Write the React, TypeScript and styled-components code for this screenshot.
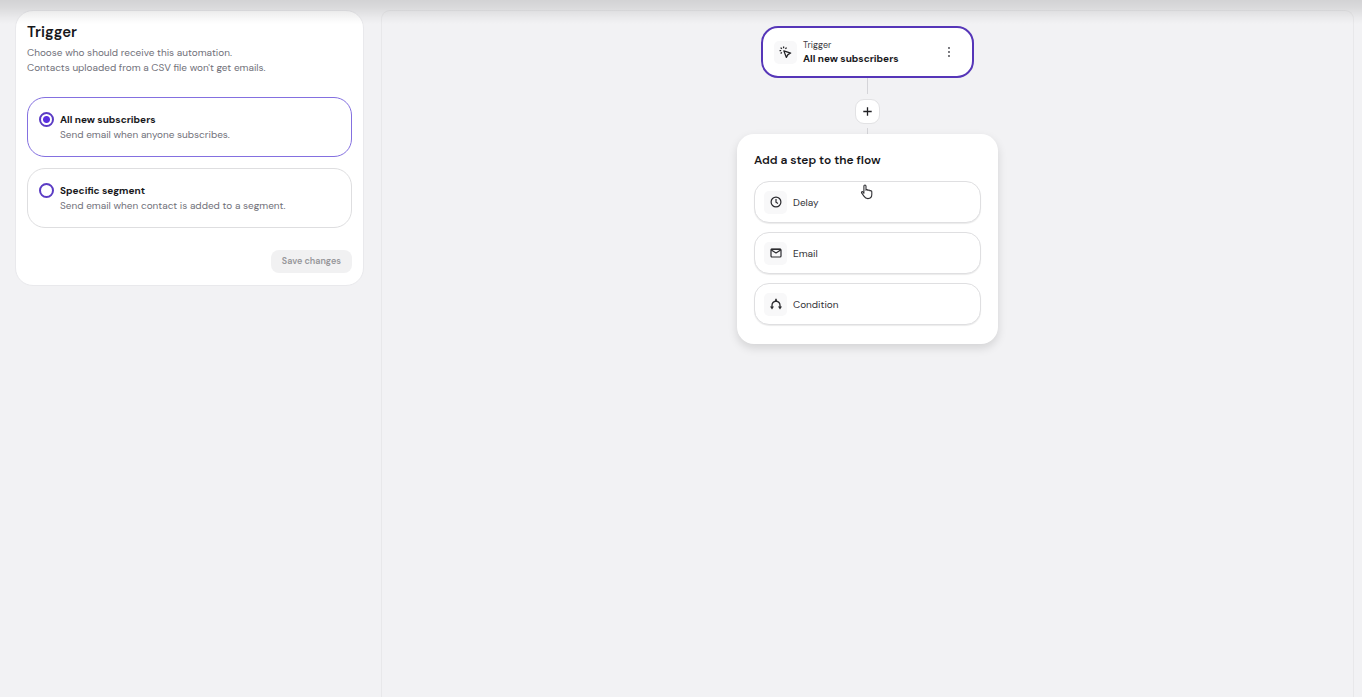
import React, { useState } from "react";
import styled, { createGlobalStyle } from "styled-components";

const GlobalStyle = createGlobalStyle`
  *, *::before, *::after { box-sizing: border-box; }
  body {
    margin: 0;
    background: #f2f2f4;
    color: #18181b;
    font-family: "DM Sans", Lato, "Open Sans", sans-serif;
    font-size: 10px;
    line-height: 15px;
  }
  button, input { font: inherit; color: inherit; }
  h1, h2, p { margin: 0; }
`;

const Page = styled.main`
  display: flex;
  align-items: flex-start;
  gap: 17px;
  min-height: 100vh;
  padding: 10px 8px 0 15px;
`;

const TopShade = styled.div`
  position: absolute;
  inset: 0 0 auto 0;
  height: 24px;
  pointer-events: none;
  background: linear-gradient(
    rgba(0, 0, 0, 0.13),
    rgba(0, 0, 0, 0.1) 30%,
    rgba(0, 0, 0, 0.03) 75%,
    transparent
  );
`;

const SettingsCard = styled.form`
  display: flex;
  flex-direction: column;
  flex: 0 0 349px;
  padding: 11px 11px 12px;
  background: #fff;
  border: 1px solid #e9e9ec;
  border-radius: 18px;
`;

const Heading = styled.h1`
  font-size: 15px;
  line-height: 20px;
  font-weight: 600;
`;

const Muted = styled.p`
  color: #71717a;
`;

const Intro = styled(Muted)`
  padding: 3px 0 22px;
`;

const Options = styled.div`
  display: flex;
  flex-direction: column;
  gap: 11px;
`;

const Option = styled.label<{ $selected: boolean }>`
  display: flex;
  align-items: flex-start;
  gap: 6px;
  padding: 14px 11px;
  background: #fff;
  border: 1px solid ${(p) => (p.$selected ? "#8470e0" : "#dedee0")};
  border-radius: 18px;
  cursor: pointer;
`;

const Radio = styled.input`
  appearance: none;
  flex: none;
  width: 15px;
  height: 15px;
  margin: 0;
  border: 2px solid #5b3cc4;
  border-radius: 50%;
  background: #fff;
  &:checked {
    background: radial-gradient(circle, #5a2fe0 3px, #fff 4px);
  }
`;

const Strong = styled.p`
  font-weight: 700;
`;

const SaveButton = styled.button`
  align-self: flex-end;
  height: 23px;
  margin-top: 22px;
  padding: 0 11px;
  border: 0;
  border-radius: 8px;
  background: #f1f1f2;
  color: #97979b;
  font-size: 9px;
  font-weight: 600;
`;

const Canvas = styled.section`
  display: flex;
  flex-direction: column;
  align-items: center;
  align-self: stretch;
  flex: 1;
  padding-top: 15px;
  border: 1px solid #e8e8ea;
  border-bottom: 0;
  border-radius: 9px 9px 0 0;
`;

const TriggerNode = styled.article`
  display: flex;
  align-items: center;
  gap: 6px;
  width: 213px;
  height: 52px;
  padding: 0 15px 0 11px;
  background: #fff;
  border: 2px solid #5636b8;
  border-radius: 17px;
`;

const IconTile = styled.span`
  display: grid;
  place-items: center;
  flex: none;
  width: 23px;
  height: 23px;
  border-radius: 5px;
  background: #f8f8f9;
`;

const NodeText = styled.div`
  flex: 1;
`;

const Kind = styled.p`
  font-size: 9px;
  line-height: 12px;
  color: #3f3f46;
`;

const MenuButton = styled.button`
  display: grid;
  place-items: center;
  width: 16px;
  height: 20px;
  padding: 0;
  border: 0;
  background: none;
`;

const Connector = styled.span<{ $length: number }>`
  width: 1px;
  height: ${(p) => p.$length}px;
  background: #d4d4d8;
`;

const AddButton = styled.button`
  display: grid;
  place-items: center;
  width: 25px;
  height: 25px;
  margin: 5px 0 4px;
  padding: 0;
  border: 1px solid #e2e2e4;
  border-radius: 9px;
  background: #fff;
`;

const StepMenu = styled.section`
  width: 261px;
  padding: 17px 17px 19px;
  background: #fff;
  border-radius: 17px;
  box-shadow: 0 4px 10px rgba(0, 0, 0, 0.13);
`;

const MenuTitle = styled.h2`
  font-size: 12px;
  line-height: 18px;
  font-weight: 600;
`;

const Steps = styled.div`
  display: flex;
  flex-direction: column;
  gap: 9px;
  margin-top: 12px;
`;

const StepButton = styled.button`
  position: relative;
  display: flex;
  align-items: center;
  gap: 6px;
  height: 42px;
  padding: 0 9px;
  border: 1px solid #dfdfe1;
  border-radius: 15px;
  background: #fff;
  box-shadow: 0 1px 1px rgba(0, 0, 0, 0.08);
  color: #333338;
  text-align: left;
`;

const Pointer = styled.svg`
  position: absolute;
  left: 105px;
  top: 2px;
  pointer-events: none;
`;

const ClickIcon = () => (
  <svg width="13" height="13" viewBox="0 0 24 24" fill="none" stroke="#202024" strokeWidth="2.400" strokeLinejoin="round" aria-hidden="true">
    <path d="M9 9 21.500 13l-5 2.800L13.500 21z" />
    <path d="M8.500 1v3M1 8.500h3M3 3l2.200 2.200M14 3l-2.200 2.200M3 14l2.200-2.200" />
  </svg>
);

const ClockIcon = () => (
  <svg width="12" height="12" viewBox="0 0 12 12" fill="none" stroke="#2b2b2f" strokeWidth="1.200" aria-hidden="true">
    <circle cx="6" cy="6" r="4.900" />
    <path d="M6 3v3.200l2 1.200" />
  </svg>
);

const MailIcon = () => (
  <svg width="12" height="12" viewBox="0 0 12 12" fill="none" stroke="#2b2b2f" strokeWidth="1.200" strokeLinejoin="round" aria-hidden="true">
    <rect x="1" y="2" width="10" height="8" rx="1" />
    <path d="M1.300 3 6 6l4.700-3M1 2.400h10" />
  </svg>
);

const BranchIcon = () => (
  <svg width="12" height="12" viewBox="0 0 12 12" fill="none" stroke="#2b2b2f" strokeWidth="1.300" aria-hidden="true">
    <path d="M6 .8v2.400M2 10V7.500C2 5.500 3.500 3.600 6 3.200C8.500 3.600 10 5.500 10 7.500V10" />
    <path d="M0 8.600h4l-2 2.900zM8 8.600h4l-2 2.900zM4.400 3.400 6 .8l1.600 2.600z" fill="#2b2b2f" stroke="none" />
  </svg>
);

const HandPointer = () => (
  <Pointer width="14" height="16" viewBox="0 0 14 16" aria-hidden="true">
    <path
      d="M3.900 9.300V2.200c0-1.600 2.100-1.600 2.100 0v4c.2-.9 1.900-.8 2 .3.300-.8 1.800-.7 2 .5.400-.7 1.800-.5 1.800.8v2.800c0 2.600-1.300 4-3.900 4-2 0-2.900-.8-3.800-2.200L1.600 8.900c-.5-1 .7-1.700 1.400-.9z"
      fill="#fff"
      stroke="#303034"
      strokeWidth="1.100"
      strokeLinejoin="round"
    />
  </Pointer>
);

const triggers = [
  { id: "all", title: "All new subscribers", text: "Send email when anyone subscribes." },
  { id: "segment", title: "Specific segment", text: "Send email when contact is added to a segment." },
];

const steps = [
  { label: "Delay", Icon: ClockIcon },
  { label: "Email", Icon: MailIcon },
  { label: "Condition", Icon: BranchIcon },
];

export default function App() {
  const [selected, setSelected] = useState("all");
  return (
    <>
      <GlobalStyle />
      <Page>
        <SettingsCard>
          <Heading>Trigger</Heading>
          <Intro>
            Choose who should receive this automation.
            <br />
            Contacts uploaded from a CSV file won't get emails.
          </Intro>
          <Options role="radiogroup" aria-label="Trigger">
            {triggers.map((t) => (
              <Option key={t.id} $selected={selected === t.id}>
                <Radio
                  type="radio"
                  name="trigger"
                  value={t.id}
                  checked={selected === t.id}
                  onChange={() => setSelected(t.id)}
                />
                <div>
                  <Strong>{t.title}</Strong>
                  <Muted>{t.text}</Muted>
                </div>
              </Option>
            ))}
          </Options>
          <SaveButton type="submit" disabled>
            Save changes
          </SaveButton>
        </SettingsCard>
        <Canvas aria-label="Automation flow">
          <TriggerNode>
            <IconTile>
              <ClickIcon />
            </IconTile>
            <NodeText>
              <Kind>Trigger</Kind>
              <Strong>All new subscribers</Strong>
            </NodeText>
            <MenuButton type="button" aria-label="More actions">
              <svg width="4" height="12" viewBox="0 0 4 12" fill="#3f3f46" aria-hidden="true">
                <circle cx="2" cy="2" r=".9" />
                <circle cx="2" cy="6" r=".9" />
                <circle cx="2" cy="10" r=".9" />
              </svg>
            </MenuButton>
          </TriggerNode>
          <Connector $length={16} />
          <AddButton type="button" aria-label="Add step">
            <svg width="9" height="9" viewBox="0 0 9 9" stroke="#202024" strokeWidth="1.300" aria-hidden="true">
              <path d="M4.500 .3v8.400M.3 4.500h8.400" />
            </svg>
          </AddButton>
          <Connector $length={6} />
          <StepMenu>
            <MenuTitle>Add a step to the flow</MenuTitle>
            <Steps>
              {steps.map(({ label, Icon }) => (
                <StepButton key={label} type="button">
                  <IconTile>
                    <Icon />
                  </IconTile>
                  {label}
                  {label === "Delay" && <HandPointer />}
                </StepButton>
              ))}
            </Steps>
          </StepMenu>
        </Canvas>
      </Page>
      <TopShade />
    </>
  );
}
